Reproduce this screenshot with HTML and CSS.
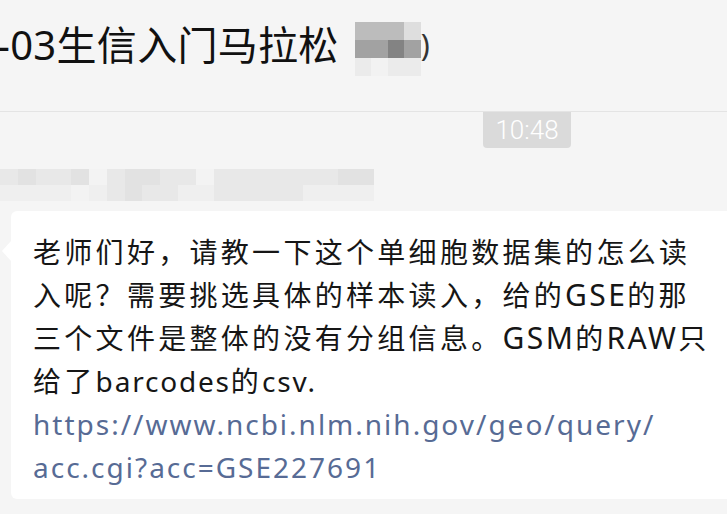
FILE: index.html
```html
<!DOCTYPE html>
<html lang="zh-CN">
<head>
    <meta charset="UTF-8">
    <title>生信入门马拉松</title>
    <link rel="stylesheet" href="styles.css">
</head>
<body>
    <div class="chat">
        <header class="chat-header">
            <span class="chat-title">-03生信入门马拉松</span>
            <span class="mosaic title-mosaic">
                <i class="m1"></i><i class="m1"></i><i class="m1"></i><i class="m4"></i>
                <i class="m2"></i><i class="m2"></i><i class="m3"></i><i class="m2"></i>
                <i class="m5"></i><i class="m6"></i><i class="m5"></i><i class="m5"></i>
            </span>
            <span class="chat-title paren">)</span>
        </header>

        <div class="chat-body">
            <div class="time-row">
                <span class="time">10:48</span>
            </div>

            <div class="sender">
                <span class="mosaic name-mosaic">
                    <i class="n2"></i><i class="n3"></i><i class="n2"></i><i class="n2"></i><i class="n3"></i><i class="n0"></i><i class="n2"></i><i class="n3"></i><i class="n3"></i><i class="n2"></i><i class="n2"></i><i class="n0"></i><i class="n2"></i><i class="n2"></i><i class="n2"></i><i class="n2"></i><i class="n2"></i><i class="n2"></i><i class="n2"></i><i class="n3"></i><i class="n3"></i>
                    <i class="n1"></i><i class="n1"></i><i class="n1"></i><i class="n1"></i><i class="n0"></i><i class="n1"></i><i class="n2"></i><i class="n3"></i><i class="n2"></i><i class="n2"></i><i class="n1"></i><i class="n1"></i><i class="n2"></i><i class="n2"></i><i class="n2"></i><i class="n2"></i><i class="n2"></i><i class="n1"></i><i class="n1"></i><i class="n1"></i><i class="n1"></i>
                </span>
            </div>

            <div class="bubble">
                <p class="msg">老师们好，请教一下这个单细胞数据集的怎么读<br>入呢？需要挑选具体的样本读入，给的<span class="latin caps">GSE</span>的那<br>三个文件是整体的没有分组信息。<span class="latin caps">GSM</span>的<span class="latin caps">RAW</span>只<br>给了<span class="latin">barcodes</span>的<span class="latin">csv.</span></p>
                <a class="link" href="#">https://www.ncbi.nlm.nih.gov/geo/query/<br>acc.cgi?acc=GSE227691</a>
            </div>
        </div>
    </div>
</body>
</html>
```

FILE: styles.css
```css
* {
    margin: 0;
    padding: 0;
    box-sizing: border-box;
}
body {
    background: #f5f5f5;
    font-family: "Noto Sans", "Noto Sans CJK SC", sans-serif;
    color: #1a1a1a;
    overflow: hidden;
    width: 727px;
    height: 514px;
}
.chat-header {
    height: 112px;
    border-bottom: 1px solid #e4e4e4;
    display: flex;
    align-items: flex-start;
    padding-top: 17px;
    margin-left: -3px;
}
.chat-title {
    font-size: 40px;
    line-height: 56px;
    letter-spacing: 0.3px;
    color: #111;
    white-space: nowrap;
}
.chat-title.paren {
    font-size: 30px;
    color: #333;
}
.mosaic {
    display: grid;
    filter: blur(0.6px);
}
.mosaic i {
    display: block;
}
.title-mosaic {
    grid-template-columns: repeat(4, 16.5px);
    grid-auto-rows: 18px;
    margin: 5px 0 0 16px;
}
.m1 { background: #bcbcbc; }
.m2 { background: #a2a2a2; }
.m3 { background: #838383; }
.m4 { background: #dedede; }
.m5 { background: #ebebeb; }
.m6 { background: #f2f2f2; }

.time-row {
    display: flex;
    justify-content: flex-start;
    padding-left: 483px;
}
.time {
    background: #dadada;
    color: #fff;
    font-family: "Roboto", sans-serif;
    font-weight: 300;
    font-size: 26px;
    line-height: 36px;
    width: 88px;
    text-align: center;
    border-radius: 0 0 4px 4px;
}
.sender {
    padding-top: 21px;
    height: 63px;
}
.name-mosaic {
    grid-template-columns: repeat(21, 17.8px);
    grid-auto-rows: 16px;
    width: 375px;
}
.n0 { background: #f3f3f3; }
.n1 { background: #efefef; }
.n2 { background: #e8e8e8; }
.n3 { background: #e2e2e2; }

.bubble {
    position: relative;
    background: #fff;
    margin-left: 11px;
    border-radius: 6px 0 0 6px;
    padding: 20px 0 12px 22px;
    height: 288px;
}
.bubble::before {
    content: "";
    position: absolute;
    left: -9px;
    top: 30px;
    border-top: 10px solid transparent;
    border-bottom: 10px solid transparent;
    border-right: 9px solid #fff;
}
.msg, .link {
    font-size: 28px;
    line-height: 43px;
    white-space: nowrap;
}
.msg {
    letter-spacing: 3.3px;
    color: #161616;
}
.latin {
    letter-spacing: 1.8px;
}
.latin.caps {
    font-size: 30px;
    line-height: 1;
    letter-spacing: 2.4px;
}
.link {
    display: block;
    color: #576b95;
    text-decoration: none;
    letter-spacing: 2px;
}
```
